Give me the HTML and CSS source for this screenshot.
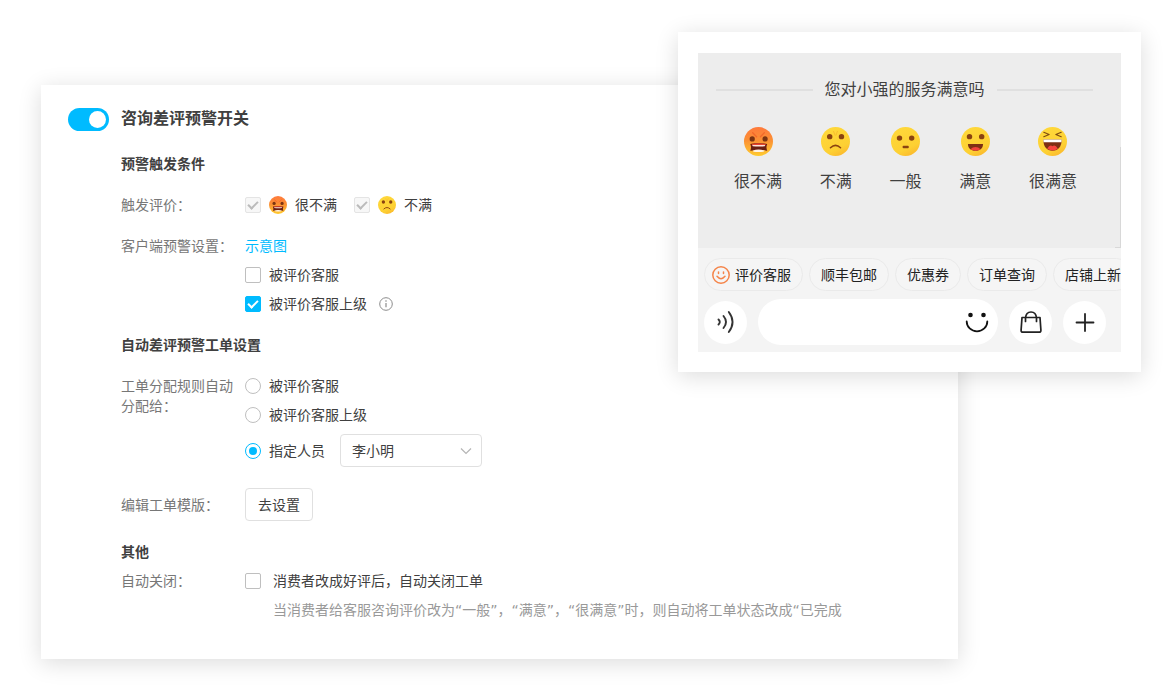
FILE: index.html
```html
<!DOCTYPE html>
<html lang="zh-CN">
<head>
<meta charset="utf-8">
<meta name="viewport" content="width=device-width, initial-scale=1">
<title>咨询差评预警</title>
<link rel="stylesheet" href="styles.css">
</head>
<body>
<svg class="sprite" aria-hidden="true">
  <defs>
    <linearGradient id="angry-fill" x1="0" y1="0" x2="0" y2="1">
      <stop offset="0" stop-color="#ff7a3c"/><stop offset=".45" stop-color="#fb8f34"/><stop offset="1" stop-color="#ffcb2e"/>
    </linearGradient>
    <linearGradient id="yellow-fill" x1=".3" y1="0" x2=".8" y2="1">
      <stop offset="0" stop-color="#ffd83a"/><stop offset=".7" stop-color="#fdd033"/><stop offset="1" stop-color="#fbb52c"/>
    </linearGradient>
    <symbol id="face-angry" viewBox="0 0 30 30">
      <circle cx="15" cy="15" r="15" fill="url(#angry-fill)"/>
      <path d="M9 6l4 4M21 6l-4 4" stroke="#f2682c" stroke-width="1.4" stroke-linecap="round"/>
      <circle cx="8.5" cy="12.3" r="2.7" fill="#7c3412"/><circle cx="21.8" cy="12.3" r="2.7" fill="#7c3412"/>
      <path d="M6.500 17.500q8.500-1.800 17.500 0q-1.500 3.500 0 7q-8.500-1.500-17.500 0q1.500-3.500 0-7z" fill="#6b1f12"/>
      <path d="M8 17.600q7-1.400 14.500 0l-.5 1.200H8.500z" fill="#e8452f"/>
      <path d="M8.500 18.700h13.500l-.6 1.300q-6 .6-12.300 0z" fill="#ffe3da"/>
      <path d="M9 24.500q6-2.400 12.500 0l-1.500 1q-5 .8-10 0z" fill="#fff3e6"/>
    </symbol>
    <symbol id="face-sad" viewBox="0 0 30 30">
      <circle cx="15" cy="15" r="15" fill="url(#yellow-fill)"/>
      <path d="M13 4.500l1.500 4M17 4.500l-1.500 4" stroke="#f8bd2e" stroke-linecap="round"/>
      <circle cx="9" cy="10" r="2.800" fill="#8a4310"/><circle cx="21.200" cy="10" r="2.800" fill="#8a4310"/>
      <path d="M9.800 21.500q5.200-5 10.400 0" fill="none" stroke="#8a4310" stroke-width="1.600" stroke-linecap="round"/>
    </symbol>
    <symbol id="face-neutral" viewBox="0 0 30 30">
      <circle cx="15" cy="15" r="15" fill="url(#yellow-fill)"/>
      <circle cx="8.800" cy="11.500" r="2.800" fill="#8a4310"/><circle cx="21.400" cy="11.500" r="2.800" fill="#8a4310"/>
      <rect x="12" y="19.500" width="6.400" height="2.400" rx="1" fill="#8a4310"/>
    </symbol>
    <symbol id="face-happy" viewBox="0 0 30 30">
      <circle cx="15" cy="15" r="15" fill="url(#yellow-fill)"/>
      <circle cx="8.800" cy="10" r="2.800" fill="#8a4310"/><circle cx="21.400" cy="10" r="2.800" fill="#8a4310"/>
      <path d="M7.200 17.500h15.600c0 4.500-3 7-7.800 7s-7.800-2.500-7.800-7z" fill="#7d2f14"/>
      <path d="M10 23c2.500-3 7.500-3 10 0c-2.500 2-7.500 2-10 0z" fill="#f0413c"/>
    </symbol>
    <symbol id="face-laugh" viewBox="0 0 30 30">
      <circle cx="15" cy="15" r="15" fill="url(#yellow-fill)"/>
      <path d="M6 5.500l5.500 2.200L6 10M24 5.500l-5.500 2.200L24 10" fill="none" stroke="#7d4a10" stroke-width="1.200" stroke-linejoin="round" stroke-linecap="round"/>
      <path d="M5.500 13h19c0 7.500-3.500 11.500-9.500 11.500s-9.500-4-9.500-11.500z" fill="#7d2f14"/>
      <path d="M5.500 13h19l-.3 2.800H5.800z" fill="#fff"/>
      <path d="M9.500 22.500q2.800-5 5.500-2.500q2.700-2.500 5.500 2.500q-5 3.500-11 0z" fill="#f5443f"/>
    </symbol>
  </defs>
</svg>

<main class="stage">
  <section class="card settings">
    <header class="settings-head">
      <input type="checkbox" role="switch" class="switch" id="alert-switch" checked>
      <h1><label for="alert-switch">咨询差评预警开关</label></h1>
    </header>

    <div class="settings-body">
      <h2>预警触发条件</h2>
      <div class="row">
        <span class="row-label">触发评价：</span>
        <div class="inline">
          <label class="option"><input type="checkbox" class="check" checked disabled><svg class="face-small"><use href="#face-angry"/></svg>很不满</label>
          <label class="option"><input type="checkbox" class="check" checked disabled><svg class="face-small"><use href="#face-sad"/></svg>不满</label>
        </div>
      </div>
      <div class="row">
        <span class="row-label">客户端预警设置：</span>
        <div class="stack">
          <a class="link" href="#preview">示意图</a>
          <label class="option"><input type="checkbox" class="check">被评价客服</label>
          <div class="with-info">
            <label class="option"><input type="checkbox" class="check" checked>被评价客服上级</label>
            <svg class="info" viewBox="0 0 14 14"><circle cx="7" cy="7" r="6.300" fill="none" stroke="#8c8c8c"/><path d="M7 6v4.300" stroke="#8c8c8c" stroke-width="1.200"/><circle cx="7" cy="4" r=".8" fill="#8c8c8c"/></svg>
          </div>
        </div>
      </div>

      <h2>自动差评预警工单设置</h2>
      <div class="row">
        <span class="row-label">工单分配规则自动分配给：</span>
        <div class="stack">
          <label class="option"><input type="radio" name="assign" class="radio">被评价客服</label>
          <label class="option"><input type="radio" name="assign" class="radio">被评价客服上级</label>
          <div class="assignee">
            <label class="option"><input type="radio" name="assign" class="radio" checked>指定人员</label>
            <div class="select-box">
              <select aria-label="指定人员"><option>李小明</option></select>
              <svg class="chevron" viewBox="0 0 12 8"><path d="M1 1.500l5 5 5-5" fill="none" stroke="#b5b5b5" stroke-width="1.200"/></svg>
            </div>
          </div>
        </div>
      </div>
      <div class="row row-middle">
        <span class="row-label">编辑工单模版：</span>
        <div><button type="button" class="button">去设置</button></div>
      </div>

      <h2>其他</h2>
      <div class="row row-tight">
        <span class="row-label">自动关闭：</span>
        <div class="stack">
          <label class="option option-wide"><input type="checkbox" class="check">消费者改成好评后，自动关闭工单</label>
          <p class="hint">当消费者给客服咨询评价改为“一般”，“满意”，“很满意”时，则自动将工单状态改成“已完成</p>
        </div>
      </div>
    </div>
  </section>

  <aside class="card preview" id="preview">
    <div class="survey">
      <h2 class="survey-title">您对小强的服务满意吗</h2>
      <div class="faces">
        <button type="button" class="face"><svg><use href="#face-angry"/></svg>很不满</button>
        <button type="button" class="face"><svg><use href="#face-sad"/></svg>不满</button>
        <button type="button" class="face"><svg><use href="#face-neutral"/></svg>一般</button>
        <button type="button" class="face"><svg><use href="#face-happy"/></svg>满意</button>
        <button type="button" class="face"><svg><use href="#face-laugh"/></svg>很满意</button>
      </div>
    </div>
    <div class="composer">
      <div class="chips">
        <button type="button" class="chip chip-icon">
          <svg viewBox="0 0 18 18" fill="none" stroke="#f5854a" stroke-width="1.500" stroke-linecap="round"><circle cx="9" cy="9" r="8.200"/><path d="M6.500 6v1.500M11.500 6v1.500M5 10.300q4 4.800 8 0"/></svg>评价客服</button>
        <button type="button" class="chip">顺丰包邮</button>
        <button type="button" class="chip">优惠券</button>
        <button type="button" class="chip">订单查询</button>
        <button type="button" class="chip">店铺上新</button>
      </div>
      <div class="entry">
        <button type="button" class="round" aria-label="语音">
          <svg viewBox="0 0 24 24" fill="none" stroke="#333" stroke-width="1.900" stroke-linecap="round"><path d="M4.500 9.500q2.600 2.500 0 5M9.500 6q5 6 0 12M14.800 2q7.500 10 0 20"/></svg>
        </button>
        <div class="message">
          <input type="text" aria-label="消息">
          <button type="button" class="smile" aria-label="表情">
            <svg viewBox="0 0 24 24"><circle cx="5.500" cy="5" r="2.300" fill="#111"/><circle cx="18.500" cy="5" r="2.300" fill="#111"/><path d="M1.700 11.500a10.300 9.800 0 0 0 20.600 0" fill="none" stroke="#111" stroke-width="1.800" stroke-linecap="round"/></svg>
          </button>
        </div>
        <button type="button" class="round" aria-label="商品">
          <svg viewBox="0 0 24 24" fill="none" stroke="#222" stroke-width="1.700" stroke-linecap="round" stroke-linejoin="round"><path d="M3 7.500h18l.9 12.500q.2 2.200-1.800 2.200H3.900q-2 0-1.800-2.200z"/><path d="M6.500 11.500V8q.5-6 5.500-6t5.500 6v3.500"/></svg>
        </button>
        <button type="button" class="round" aria-label="更多">
          <svg viewBox="0 0 24 24" fill="none" stroke="#222" stroke-width="1.800" stroke-linecap="round"><path d="M12 4v17M3.500 12.500h17"/></svg>
        </button>
      </div>
    </div>
  </aside>
</main>
</body>
</html>
```

FILE: styles.css
```css
* { box-sizing: border-box; }

body {
  margin: 0;
  background: #fff;
  color: #404040;
  font: 14px/20px "Liberation Sans", "Noto Sans CJK SC", sans-serif;
}

h1, h2, p { margin: 0; }
button, input, select { font: inherit; color: inherit; margin: 0; }
button { cursor: pointer; }
svg { display: block; flex: none; }

.sprite { position: absolute; width: 0; height: 0; }

.stage {
  position: relative;
  padding: 85px 215px 40px 41px;
}

.card {
  background: #fff;
  box-shadow: 0 4px 22px rgba(0, 0, 0, .14);
}

/* Settings panel */
.settings { padding: 22px 27px 39px; }

.settings-head {
  display: flex;
  align-items: center;
  gap: 12px;
}

.settings-head h1 {
  font-size: 16px;
  line-height: 24px;
  font-weight: 700;
}

.switch {
  appearance: none;
  display: flex;
  align-items: center;
  width: 41px;
  height: 23px;
  padding: 3px;
  border-radius: 12px;
  background: #ccc;
}

.switch::before {
  content: "";
  width: 17px;
  height: 17px;
  border-radius: 50%;
  background: #fff;
}

.switch:checked {
  justify-content: flex-end;
  background: #00bbff;
}

.settings-body {
  display: flex;
  flex-direction: column;
  gap: 21px;
  padding: 23px 0 0 53px;
}

.settings-body h2 {
  font-size: 14px;
  line-height: 20px;
  font-weight: 700;
}

.row {
  display: grid;
  grid-template-columns: 114px 1fr;
  column-gap: 10px;
}

.row-middle { align-items: center; }
.row-tight { margin-top: -12px; }
.row-label { color: #777; }

.stack {
  display: flex;
  flex-direction: column;
  align-items: flex-start;
  gap: 9px;
}

.inline { display: flex; gap: 17px; }

.option {
  display: flex;
  align-items: center;
  gap: 8px;
}

.option-wide { gap: 12px; }

.face-small { width: 18px; height: 18px; }

.link { color: #00bbff; text-decoration: none; }

.check, .radio {
  appearance: none;
  display: grid;
  place-content: center;
  flex: none;
  width: 16px;
  height: 16px;
  border: 1px solid #bfbfbf;
  background: #fff;
}

.check { border-radius: 2px; }
.radio { border-radius: 50%; }

.check:checked {
  border-color: #00bbff;
  background: #00bbff;
}

.check:checked::before {
  content: "";
  box-sizing: border-box;
  width: 10px;
  height: 6px;
  margin-bottom: 3px;
  border: solid #fff;
  border-width: 0 0 2px 2px;
  rotate: -45deg;
}

.check:disabled {
  border-color: #e4e4e4;
  background: #f7f7f7;
}

.check:disabled::before { border-color: #bbb; }

.radio:checked { border-color: #00bbff; }

.radio:checked::before {
  content: "";
  width: 8px;
  height: 8px;
  border-radius: 50%;
  background: #00bbff;
}

.with-info {
  display: flex;
  align-items: center;
  gap: 12px;
}

.info { width: 14px; height: 14px; }

.assignee {
  display: flex;
  align-items: center;
  gap: 15px;
}

.select-box { position: relative; }

.select-box select {
  appearance: none;
  display: block;
  width: 142px;
  height: 33px;
  padding: 0 30px 0 11px;
  border: 1px solid #e0e0e0;
  border-radius: 4px;
  background: #fff;
}

.chevron {
  position: absolute;
  top: 13px;
  right: 10px;
  width: 12px;
  height: 8px;
  pointer-events: none;
}

.button {
  display: block;
  height: 33px;
  padding: 0 12px;
  border: 1px solid #e0e0e0;
  border-radius: 4px;
  background: #fff;
}

.hint {
  padding-left: 28px;
  color: #999;
  font-family: "DejaVu Sans", "Noto Sans CJK SC", sans-serif;
}

/* Chat preview */
.preview {
  position: absolute;
  top: 32px;
  right: 32px;
  width: 463px;
  padding: 21px 20px 20px;
}

.survey {
  position: relative;
  padding: 25px 0 54px;
  background: #ededed;
}

.survey::after {
  content: "";
  position: absolute;
  right: 0;
  bottom: 0;
  width: 5px;
  height: 100px;
  border: solid #d8d8d8;
  border-width: 0 1px 1px 0;
}

.survey-title {
  display: flex;
  align-items: center;
  gap: 12px;
  padding: 0 28px 0 18px;
  font-size: 16px;
  line-height: 24px;
  font-weight: 400;
}

.survey-title::before,
.survey-title::after {
  content: "";
  flex: 1;
  height: 2px;
  background: #e0e0e0;
}

.faces {
  display: flex;
  justify-content: space-between;
  padding: 25px 44px 0 36px;
}

.face {
  display: flex;
  flex-direction: column;
  align-items: center;
  gap: 14px;
  padding: 0;
  border: 0;
  background: none;
  font-size: 16px;
  line-height: 24px;
}

.face svg { width: 29px; height: 29px; }

.composer {
  padding: 10px 0 7px 6px;
  background: #f4f4f4;
}

.chips {
  display: flex;
  gap: 6px;
  overflow: hidden;
}

.chip {
  display: flex;
  align-items: center;
  flex: none;
  gap: 5px;
  height: 33px;
  padding: 0 11px;
  border: 1px solid #eaeaea;
  border-radius: 17px;
  background: #f5f5f5;
  color: #222;
}

.chip-icon { padding-left: 7px; }
.chip svg { width: 18px; height: 18px; }

.entry {
  display: flex;
  align-items: center;
  gap: 11px;
  padding: 8px 15px 0 0;
}

.round {
  display: grid;
  place-content: center;
  flex: none;
  width: 43px;
  height: 43px;
  padding: 0;
  border: 0;
  border-radius: 50%;
  background: #fff;
}

.round svg, .smile svg { width: 24px; height: 24px; }

.message {
  display: flex;
  align-items: center;
  flex: 1;
  min-width: 0;
  height: 46px;
  padding: 0 9px 0 20px;
  border-radius: 23px;
  background: #fff;
}

.message input {
  flex: 1;
  min-width: 0;
  border: 0;
  outline: 0;
  background: none;
}

.smile {
  padding: 0;
  border: 0;
  background: none;
}
```
